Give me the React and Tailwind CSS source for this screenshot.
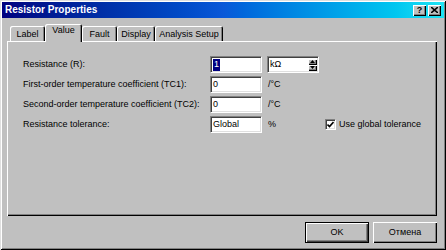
import React from 'react'

const raised = 'bg-[#c0c0c0] shadow-[inset_1px_1px_0_#fff,inset_-1px_-1px_0_#000,inset_-2px_-2px_0_#808080]'
const sunken = 'bg-white border-t border-l border-t-[#808080] border-l-[#808080] border-b border-r border-b-white border-r-white shadow-[inset_1px_1px_0_#404040,inset_-1px_-1px_0_#dfdfdf]'

function Tab({ label, width, active }) {
  if (active) {
    return (
      <div
        className={`relative z-10 -mb-[1px] h-[18px] ${width} bg-[#c0c0c0] rounded-t-[2px] shadow-[inset_1px_1px_0_#fff,inset_-1px_0_0_#000,inset_-2px_0_0_#808080] flex items-start justify-center pt-[2px]`}
      >
        {label}
      </div>
    )
  }
  return (
    <div
      className={`h-[15px] ${width} bg-[#c0c0c0] rounded-t-[2px] shadow-[inset_1px_1px_0_#fff,inset_-1px_0_0_#000,inset_-2px_0_0_#808080] flex items-center justify-center pt-[1px]`}
    >
      {label}
    </div>
  )
}

function Field({ children }) {
  return (
    <div className={`w-[52px] h-[17px] ${sunken} flex items-center pl-[2px]`}>{children}</div>
  )
}

function Row({ label, children }) {
  return (
    <div className="flex items-center h-[17px]">
      <div className="w-[187px]">{label}</div>
      {children}
    </div>
  )
}

export default function App() {
  return (
    <div
      className="w-[446px] h-[250px] bg-[#c0c0c0] p-[2px] text-[9px] leading-none text-black shadow-[inset_1px_1px_0_#dfdfdf,inset_-1px_-1px_0_#000,inset_2px_2px_0_#fff,inset_-2px_-2px_0_#808080]"
      style={{ fontFamily: '"Liberation Sans", Arial, sans-serif' }}
    >
      {/* title bar */}
      <div className="h-[16px] bg-linear-to-r from-[#000080] via-[#0a58d8] to-[#1ee4f4] flex items-center justify-between pl-[3px] pr-[3px]">
        <span className="text-white font-bold text-[10px]">Resistor Properties</span>
        <div className="flex gap-[2px]">
          <div className={`w-[13px] h-[11px] ${raised} flex items-center justify-center font-bold text-[9px]`}>?</div>
          <div className={`w-[13px] h-[11px] ${raised} flex items-center justify-center`}>
            <svg width="7" height="6" viewBox="0 0 7 6">
              <path d="M0 0 L7 6 M7 0 L0 6" stroke="#000" strokeWidth="1.6" />
            </svg>
          </div>
        </div>
      </div>

      <div className="ml-[5px] w-[430px]">
        {/* tabs */}
        <div className="flex items-end pl-[3px] mt-[6px] h-[17px]">
          <Tab label="Label" width="w-[35px]" />
          <Tab label="Value" width="w-[37px]" active />
          <Tab label="Fault" width="w-[35px]" />
          <Tab label="Display" width="w-[38px]" />
          <Tab label="Analysis Setup" width="w-[68px]" />
        </div>

        {/* panel */}
        <div className="h-[175px] bg-[#c0c0c0] shadow-[inset_1px_1px_0_#fff,inset_-1px_-1px_0_#000,inset_-2px_-2px_0_#808080] pt-[15px] pl-[16px] flex flex-col gap-[3px]">
          <Row label="Resistance (R):">
            <Field>
              <span className="bg-[#000080] text-white px-[1px] h-[12px] flex items-center">1</span>
            </Field>
            <div className={`ml-[5px] w-[52px] h-[17px] ${sunken} flex items-center justify-between pl-[2px] pr-[1px]`}>
              <span>kΩ</span>
              <div className="flex flex-col">
                <div className={`w-[9px] h-[6px] ${raised} flex items-center justify-center`}>
                  <svg width="5" height="3" viewBox="0 0 5 3"><path d="M2.5 0 L5 3 L0 3 Z" fill="#000" /></svg>
                </div>
                <div className={`w-[9px] h-[6px] ${raised} flex items-center justify-center`}>
                  <svg width="5" height="3" viewBox="0 0 5 3"><path d="M0 0 L5 0 L2.5 3 Z" fill="#000" /></svg>
                </div>
              </div>
            </div>
          </Row>
          <Row label="First-order temperature coefficient (TC1):">
            <Field>0</Field>
            <span className="ml-[6px]">/°C</span>
          </Row>
          <Row label="Second-order temperature coefficient (TC2):">
            <Field>0</Field>
            <span className="ml-[6px]">/°C</span>
          </Row>
          <Row label="Resistance tolerance:">
            <Field>Global</Field>
            <span className="ml-[6px] w-[57px]">%</span>
            <div className={`w-[11px] h-[11px] ${sunken} flex items-center justify-center`}>
              <svg width="7" height="7" viewBox="0 0 7 7">
                <path d="M0.5 3.5 L2.5 5.5 L6.5 1" stroke="#000" strokeWidth="1.6" fill="none" />
              </svg>
            </div>
            <span className="ml-[3px]">Use global tolerance</span>
          </Row>
        </div>

        {/* buttons */}
        <div className="flex justify-end gap-[4px] mt-[6px]">
          <button className="w-[64px] h-[21px] border border-black bg-[#c0c0c0] shadow-[inset_1px_1px_0_#fff,inset_-1px_-1px_0_#404040,inset_-2px_-2px_0_#808080] flex items-center justify-center">
            OK
          </button>
          <button className={`w-[64px] h-[21px] ${raised} flex items-center justify-center`}>
            Отмена
          </button>
        </div>
      </div>
    </div>
  )
}
